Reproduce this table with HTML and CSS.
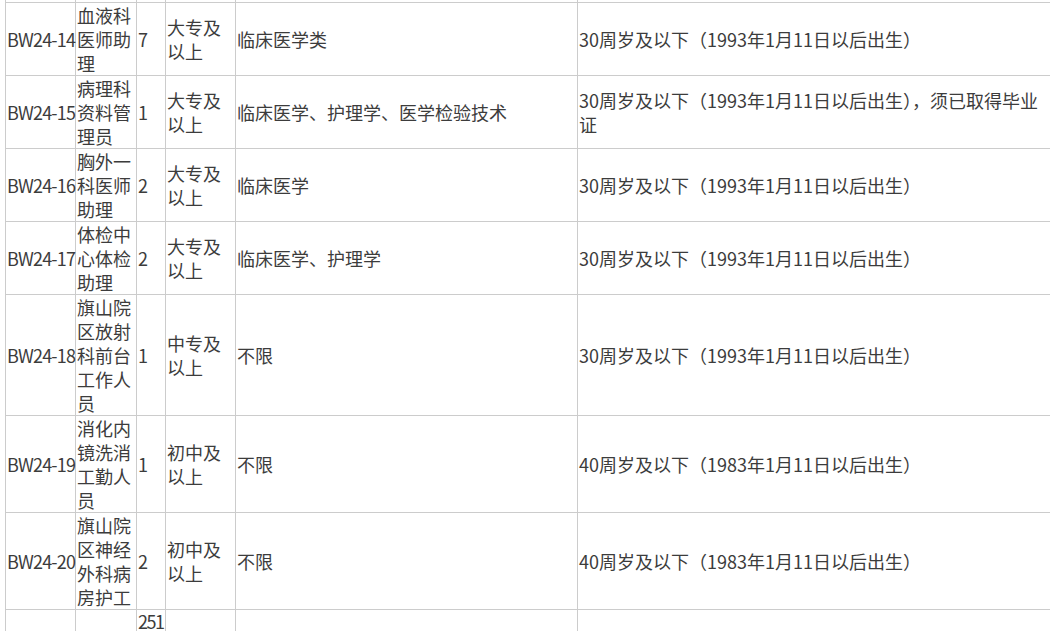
FILE: index.html
```html
<!DOCTYPE html>
<html lang="zh-CN">
<head>
<meta charset="utf-8">
<title>招聘岗位表</title>
<link rel="stylesheet" href="styles.css">
</head>
<body>
<table class="jobs">
  <colgroup>
    <col class="c-code">
    <col class="c-name">
    <col class="c-num">
    <col class="c-edu">
    <col class="c-major">
    <col class="c-req">
  </colgroup>
  <tbody>
    <tr class="sliver"><td></td><td></td><td></td><td></td><td></td><td></td></tr>
    <tr>
      <td class="code">BW24-14</td><td>血液科医师助理</td><td class="num">7</td><td>大专及以上</td><td>临床医学类</td><td>30周岁及以下（1993年1月11日以后出生）</td>
    </tr>
    <tr>
      <td class="code">BW24-15</td><td>病理科资料管理员</td><td class="num">1</td><td>大专及以上</td><td>临床医学、护理学、医学检验技术</td><td>30周岁及以下（1993年1月11日以后出生），须已取得毕业证</td>
    </tr>
    <tr>
      <td class="code">BW24-16</td><td>胸外一科医师助理</td><td class="num">2</td><td>大专及以上</td><td>临床医学</td><td>30周岁及以下（1993年1月11日以后出生）</td>
    </tr>
    <tr>
      <td class="code">BW24-17</td><td>体检中心体检助理</td><td class="num">2</td><td>大专及以上</td><td>临床医学、护理学</td><td>30周岁及以下（1993年1月11日以后出生）</td>
    </tr>
    <tr>
      <td class="code">BW24-18</td><td>旗山院区放射科前台工作人员</td><td class="num">1</td><td>中专及以上</td><td>不限</td><td>30周岁及以下（1993年1月11日以后出生）</td>
    </tr>
    <tr>
      <td class="code">BW24-19</td><td>消化内镜洗消工勤人员</td><td class="num">1</td><td>初中及以上</td><td>不限</td><td>40周岁及以下（1983年1月11日以后出生）</td>
    </tr>
    <tr>
      <td class="code">BW24-20</td><td>旗山院区神经外科病房护工</td><td class="num">2</td><td>初中及以上</td><td>不限</td><td>40周岁及以下（1983年1月11日以后出生）</td>
    </tr>
    <tr class="total">
      <td></td><td></td><td class="num">251</td><td></td><td></td><td></td>
    </tr>
  </tbody>
</table>
</body>
</html>
```

FILE: styles.css
```css
html {
  overflow: hidden;
}
body {
  margin: 0 0 0 5px;
  background: #fff;
  font-family: "Noto Sans CJK SC", "Microsoft YaHei", sans-serif;
  font-size: 18px;
  color: #3c3c3c;
}
.jobs {
  border-collapse: collapse;
  table-layout: fixed;
  width: 1046px;
}
.c-code { width: 70px; }
.c-name { width: 61px; }
.c-num { width: 29px; }
.c-edu { width: 70px; }
.c-major { width: 342px; }
.c-req { width: 474px; }
.jobs td {
  border: 1px solid #cccccc;
  padding: 0 1px;
  line-height: 24px;
  vertical-align: middle;
  text-align: left;
  word-break: break-all;
}
.jobs td.code {
  white-space: nowrap;
  letter-spacing: -0.8px;
  padding: 0 0 0 1px;
}
.jobs td.num {
  white-space: nowrap;
  letter-spacing: -1.5px;
  padding: 0 0 0 1px;
}
.jobs .total td {
  line-height: 22px;
}
.jobs .sliver td {
  border-top: 0;
  height: 2px;
  line-height: 0;
  font-size: 0;
  padding: 0;
}
```
